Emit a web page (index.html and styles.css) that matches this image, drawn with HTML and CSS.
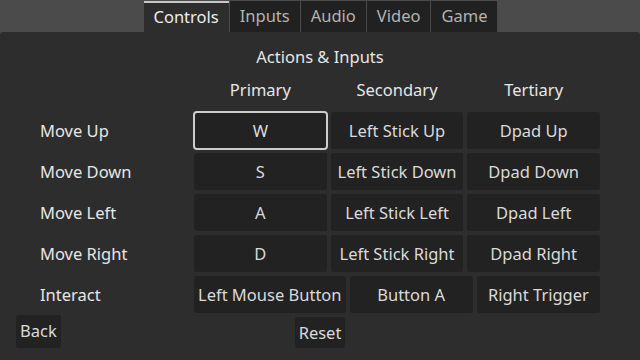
FILE: index.html
```html
<!DOCTYPE html>
<html lang="en">
<head>
  <meta charset="UTF-8" />
  <title>Options</title>
  <link rel="stylesheet" href="styles.css">
</head>
<body>
  <div class="tabs">
    <div class="tab active">Controls</div>
    <div class="tab">Inputs</div>
    <div class="tab">Audio</div>
    <div class="tab">Video</div>
    <div class="tab">Game</div>
  </div>

  <div class="panel">
    <div class="title">Actions &amp; Inputs</div>

    <div class="row header">
      <div class="action"></div>
      <div class="col-head">Primary</div>
      <div class="col-head">Secondary</div>
      <div class="col-head">Tertiary</div>
    </div>

    <div class="row">
      <div class="action">Move Up</div>
      <div class="btn focused">W</div>
      <div class="btn">Left Stick Up</div>
      <div class="btn">Dpad Up</div>
    </div>
    <div class="row">
      <div class="action">Move Down</div>
      <div class="btn">S</div>
      <div class="btn">Left Stick Down</div>
      <div class="btn">Dpad Down</div>
    </div>
    <div class="row">
      <div class="action">Move Left</div>
      <div class="btn">A</div>
      <div class="btn">Left Stick Left</div>
      <div class="btn">Dpad Left</div>
    </div>
    <div class="row">
      <div class="action">Move Right</div>
      <div class="btn">D</div>
      <div class="btn">Left Stick Right</div>
      <div class="btn">Dpad Right</div>
    </div>
    <div class="row">
      <div class="action">Interact</div>
      <div class="btn">Left Mouse Button</div>
      <div class="btn">Button A</div>
      <div class="btn">Right Trigger</div>
    </div>

    <div class="footer">
      <div class="small-btn back">Back</div>
      <div class="small-btn reset">Reset</div>
      <div></div>
    </div>
  </div>
</body>
</html>
```

FILE: styles.css
```css
html, body {
  height: 100%;
}
body {
  margin: 0;
  background: #4b4b4b;
  font-family: "Noto Sans", "Open Sans", sans-serif;
  font-size: 16.5px;
  color: #e6e6e6;
  display: flex;
  flex-direction: column;
  overflow: hidden;
}
.tabs {
  display: flex;
  justify-content: center;
  gap: 1px;
  padding-top: 1px;
  padding-left: 1px;
  height: 31px;
}
.tab {
  background: #212121;
  color: #b3b3b3;
  padding: 0 10px 1px;
  line-height: 30px;
  white-space: nowrap;
}
.tab.active {
  background: #2d2d2d;
  color: #ececec;
  border-top: 2px solid #c9c9c9;
  line-height: 28px;
}
.panel {
  flex: 1;
  background: #2d2d2d;
  border-radius: 3px 3px 0 0;
  padding: 14px 40px 0;
}
.title {
  text-align: center;
  line-height: 22px;
  margin-bottom: 11px;
}
.row {
  display: flex;
  gap: 4px;
  margin-bottom: 4px;
  height: 37px;
}
.row.header {
  height: 22px;
  margin-bottom: 11px;
}
.action {
  width: 150px;
  flex: none;
  line-height: 37px;
}
.col-head {
  flex: 1 1 0;
  text-align: center;
  line-height: 22px;
}
.btn {
  flex: 1 1 0;
  background: #222222;
  border-radius: 3px;
  color: #dadada;
  text-align: center;
  line-height: 37px;
  padding: 0 4px;
  white-space: nowrap;
}
.btn.focused {
  outline: 2px solid #cdcdcd;
  outline-offset: -1px;
}
.footer {
  display: grid;
  grid-template-columns: 1fr auto 1fr;
  margin: 0 -40px;
}
.small-btn {
  background: #222222;
  border-radius: 3px;
  color: #dadada;
  padding: 0 4px;
  line-height: 31px;
}
.back {
  justify-self: start;
  margin-left: 16px;
  margin-top: -2px;
}
.reset {
  justify-self: center;
}
```
